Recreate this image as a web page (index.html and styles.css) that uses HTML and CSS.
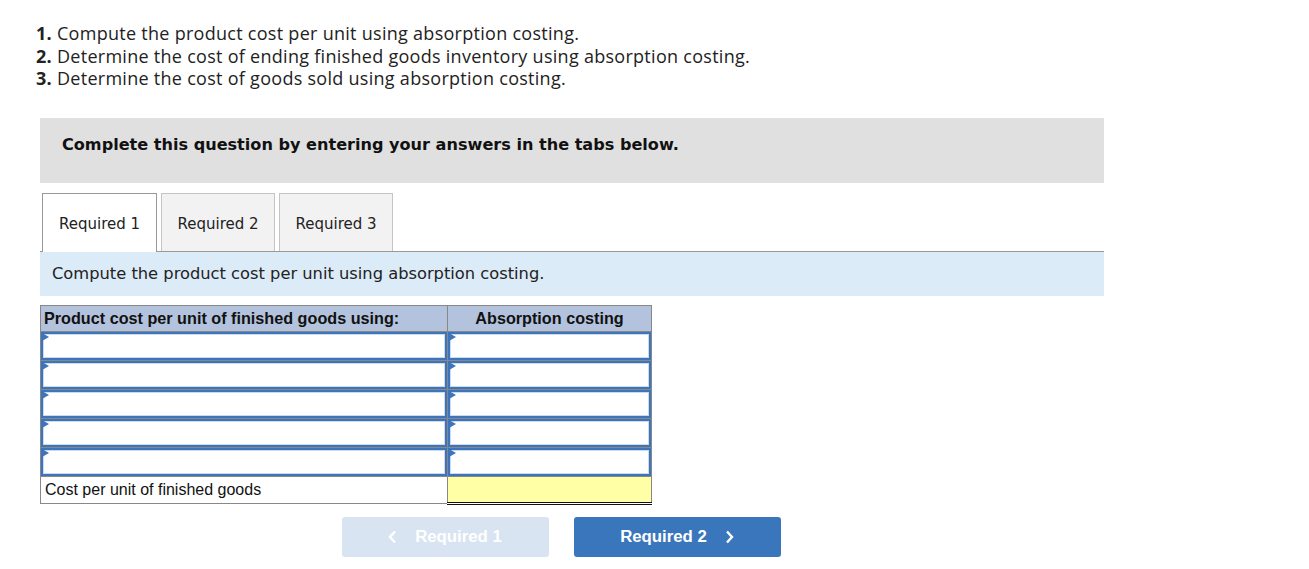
FILE: index.html
```html
<!DOCTYPE html>
<html lang="en">
<head>
<meta charset="UTF-8">
<meta name="viewport" content="width=device-width, initial-scale=1.0">
<title>Absorption Costing</title>
<link rel="stylesheet" href="styles.css">
</head>
<body>
<div class="intro">
  <div><b>1.</b> Compute the product cost per unit using absorption costing.</div>
  <div><b>2.</b> Determine the cost of ending finished goods inventory using absorption costing.</div>
  <div><b>3.</b> Determine the cost of goods sold using absorption costing.</div>
</div>

<div class="question">
  <div class="prompt">Complete this question by entering your answers in the tabs below.</div>

  <div class="tabs">
    <div class="tab active">Required 1</div>
    <div class="tab">Required 2</div>
    <div class="tab">Required 3</div>
  </div>

  <div class="instr">Compute the product cost per unit using absorption costing.</div>

  <table class="grid">
    <tr>
      <th class="label-col">Product cost per unit of finished goods using:</th>
      <th class="value-col">Absorption costing</th>
    </tr>
    <tr><td class="entry"><div class="field"></div></td><td class="entry"><div class="field"></div></td></tr>
    <tr><td class="entry"><div class="field"></div></td><td class="entry"><div class="field"></div></td></tr>
    <tr><td class="entry"><div class="field"></div></td><td class="entry"><div class="field"></div></td></tr>
    <tr><td class="entry"><div class="field"></div></td><td class="entry"><div class="field"></div></td></tr>
    <tr><td class="entry"><div class="field"></div></td><td class="entry"><div class="field"></div></td></tr>
    <tr>
      <td class="total-label">Cost per unit of finished goods</td>
      <td class="total-value"></td>
    </tr>
  </table>

  <div class="nav">
    <button class="nav-btn prev" disabled>
      <svg class="chev" width="9" height="14" viewBox="0 0 9 14"><polyline points="7,1.5 2,7 7,12.5" fill="none" stroke="#fff" stroke-width="2.4"/></svg>
      Required 1
    </button>
    <button class="nav-btn next">
      Required 2
      <svg class="chev" width="9" height="14" viewBox="0 0 9 14"><polyline points="2,1.5 7,7 2,12.5" fill="none" stroke="#fff" stroke-width="2.4"/></svg>
    </button>
  </div>
</div>
</body>
</html>
```

FILE: styles.css
```css
body {
  margin: 0;
  padding: 0;
  background: #fff;
  color: #222;
}
.intro {
  padding: 22px 0 0 36px;
  font-family: "Open Sans", Lato, sans-serif;
  font-size: 18px;
  letter-spacing: 0.28px;
  line-height: 22.5px;
  color: #222;
}
.intro b {
  font-weight: 700;
}
.question {
  margin: 28px 0 0 40px;
  width: 1064px;
}
.prompt {
  background-color: #e0e0e0;
  height: 65px;
  line-height: 54px;
  padding-left: 22px;
  font-family: "DejaVu Sans", Verdana, sans-serif;
  font-weight: bold;
  font-size: 16.1px;
  color: #111;
}
.tabs {
  display: flex;
  gap: 4px;
  margin-top: 10px;
  padding-left: 2px;
  border-bottom: 1px solid #999;
}
.tab {
  width: 112px;
  height: 57px;
  line-height: 60px;
  text-align: center;
  border: 1px solid #c4c4c4;
  border-bottom: none;
  background-color: #f2f2f2;
  font-family: "DejaVu Sans", Verdana, sans-serif;
  font-size: 15px;
  color: #222;
}
.tab.active {
  width: 113px;
  background-color: #fff;
  border-color: #999;
  height: 58px;
  margin-bottom: -1px;
}
.instr {
  background-color: #dcebf8;
  height: 44px;
  line-height: 44px;
  padding-left: 12px;
  font-family: "DejaVu Sans", Verdana, sans-serif;
  font-size: 16.3px;
  color: #222;
}
.grid {
  margin-top: 9px;
  border-collapse: collapse;
  width: 612px;
  font-family: "Liberation Sans", Arial, sans-serif;
}
.grid th {
  background-color: #b3c3de;
  border: 1px solid #888;
  height: 25px;
  padding: 0 3px;
  font-size: 16.2px;
  font-weight: bold;
  color: #111;
}
.label-col {
  width: 400px;
  text-align: left;
}
.value-col {
  text-align: center;
}
.entry {
  border: 1px solid #888;
  border-top: none;
  padding: 0;
  height: 28px;
  position: relative;
}
.field {
  height: 24px;
  border: 2px solid #3d74ba;
  box-shadow: inset 0 0 0 1px #c9dbef;
  background: #fff;
}
.entry::before {
  content: "";
  position: absolute;
  left: 1px;
  top: 1px;
  border-left: 7px solid #3d74ba;
  border-top: 4px solid transparent;
  border-bottom: 4px solid transparent;
}
.total-label {
  border: 1px solid #888;
  height: 26px;
  padding: 0 4px;
  font-size: 16px;
  color: #111;
}
.total-value {
  background-color: #ffffa6;
  border: 1px solid #888;
  border-top: 1px solid #333;
  border-bottom: 3px double #111;
}
.nav {
  display: flex;
  justify-content: center;
  gap: 25px;
  margin-top: 12px;
  padding-right: 22px;
}
.nav-btn {
  display: flex;
  align-items: center;
  justify-content: center;
  gap: 18px;
  width: 207px;
  height: 40px;
  border: none;
  border-radius: 3px;
  font-family: "Liberation Sans", Arial, sans-serif;
  font-size: 16.8px;
  font-weight: bold;
  color: #fff;
  cursor: pointer;
}
.prev {
  background-color: #d9e4f2;
  cursor: default;
}
.next {
  background-color: #3a76bb;
}
```
